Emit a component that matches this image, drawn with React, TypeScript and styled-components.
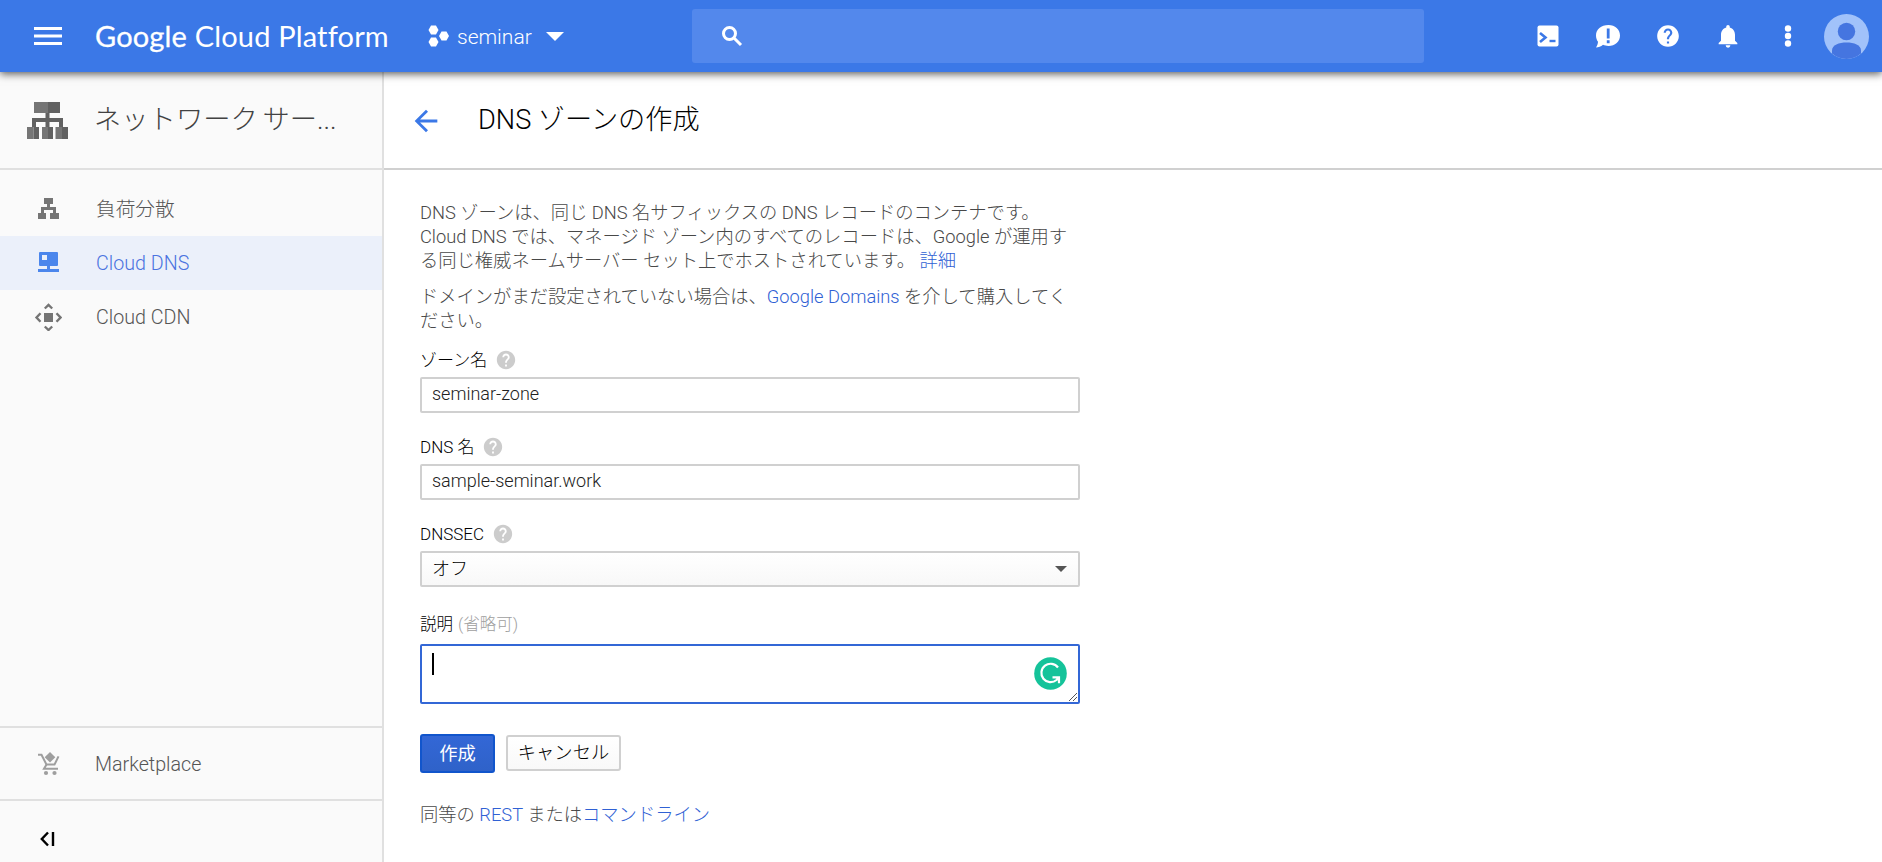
import React from 'react';
import styled, { createGlobalStyle } from 'styled-components';
import { MdArrowBack, MdHelp, MdNotifications } from 'react-icons/md';

const GlobalStyle = createGlobalStyle`
  * { box-sizing: border-box; }
  body {
    margin: 0;
    background: #fff;
    font-family: Roboto, 'Noto Sans CJK JP', sans-serif;
    font-weight: 300;
    color: #000;
    overflow: hidden;
  }
`;

const Page = styled.div`
  display: flex;
  flex-direction: column;
  height: 862px;
`;

/* ---------- top bar ---------- */

const TopBar = styled.header`
  position: relative;
  z-index: 2;
  flex: none;
  display: flex;
  align-items: center;
  height: 72px;
  padding: 0 13px 0 34px;
  background: #3b78e7;
  color: #fff;
  box-shadow: 0 2px 8px rgba(0, 0, 0, 0.65);
`;

const MenuBars = styled.svg`
  flex: none;
  width: 28px;
  height: 18px;
`;

const Brand = styled.div`
  width: 294px;
  margin: 0 39px 0 33px;
  font-family: Lato, sans-serif;
  font-size: 29px;
  font-weight: 400;
  line-height: 40px;
  letter-spacing: 0.17px;
  white-space: nowrap;
`;

const BrandStrong = styled.span`
  -webkit-text-stroke: 0.3px #fff;
`;

const Project = styled.div`
  display: flex;
  align-items: center;
  width: 264px;
`;

const ProjectName = styled.span`
  margin: 0 14px 0 7px;
  padding-top: 2px;
  font-size: 21px;
  line-height: 30px;
`;

const Search = styled.div`
  display: flex;
  align-items: center;
  width: 732px;
  height: 54px;
  padding-left: 30px;
  border-radius: 3px;
  background: #5388ec;
`;

const Actions = styled.div`
  display: flex;
  align-items: center;
  margin-left: auto;
`;

const Action = styled.span`
  display: flex;
  align-items: center;
  justify-content: center;
  width: 60px;
  height: 36px;
`;

const Avatar = styled.svg`
  width: 45px;
  height: 45px;
  margin-left: 6px;
`;

/* ---------- sidebar ---------- */

const Body = styled.div`
  flex: 1;
  display: flex;
  min-height: 0;
`;

const Sidebar = styled.nav`
  flex: none;
  display: flex;
  flex-direction: column;
  width: 384px;
  background: #fafafa;
  border-right: 2px solid #e0e0e0;
`;

const SideHeader = styled.div`
  display: flex;
  align-items: center;
  height: 98px;
  padding: 0 0 0 27px;
  border-bottom: 2px solid #e0e0e0;
  color: #424242;
  font-size: 27.3px;
`;

const SideTitle = styled.span`
  margin-left: 26px;
  line-height: 40px;
  word-spacing: -2px;
  white-space: nowrap;
`;

const SideList = styled.div`
  flex: 1;
  padding-top: 12px;
`;

const SideItem = styled.div<{ $active?: boolean; $height?: number; $lift?: number }>`
  display: flex;
  align-items: center;
  height: ${(p) => p.$height ?? 54}px;
  padding: 0 0 ${(p) => p.$lift ?? 0}px 34px;
  background: ${(p) => (p.$active ? '#ebf0fa' : 'transparent')};
  color: ${(p) => (p.$active ? '#4a73e0' : '#555')};
  font-size: 19.7px;
`;

const SideIcon = styled.svg`
  flex: none;
  width: 28px;
  height: 28px;
  margin-right: 34px;
`;

const SideLabel = styled.span`
  padding-top: 2px;
  margin-left: -1px;
`;

const SideFooter = styled.div`
  border-top: 2px solid #e0e0e0;
`;

const Collapse = styled.div`
  display: flex;
  height: 63px;
  padding: 30px 0 0 40px;
  border-top: 2px solid #e0e0e0;
`;

/* ---------- content ---------- */

const Main = styled.main`
  flex: 1;
  background: #fff;
`;

const TitleBar = styled.div`
  display: flex;
  align-items: center;
  height: 98px;
  padding: 2px 0 0 25px;
  border-bottom: 2px solid #d0d0d0;
`;

const Title = styled.h1`
  margin: 0 0 0 35px;
  padding-bottom: 3px;
  font-size: 27.2px;
  font-weight: 300;
  line-height: 40px;
`;

const Form = styled.div`
  width: 696px;
  padding: 31px 0 0 36px;
`;

const Paragraph = styled.p<{ $gap?: number }>`
  margin: 0 0 ${(p) => p.$gap ?? 12}px;
  color: #484848;
  font-size: 18.3px;
  line-height: 24px;
  white-space: nowrap;
`;

const Line = styled.span`
  display: block;
  height: 24px;
`;

const Link = styled.a`
  color: #3061d4;
`;

const Field = styled.div<{ $gap?: number }>`
  margin-bottom: ${(p) => p.$gap ?? 21}px;
`;

const Label = styled.div<{ $gap?: number; $size?: number }>`
  display: flex;
  align-items: center;
  height: 24px;
  margin-bottom: ${(p) => p.$gap ?? 6}px;
  padding-top: 2px;
  font-size: ${(p) => p.$size ?? 17}px;
  line-height: 24px;
`;

const Optional = styled.span`
  margin-left: 5px;
  color: #9e9e9e;
`;

const Hint = styled(MdHelp)`
  width: 22px;
  height: 22px;
  margin-left: 8px;
  color: #ccc;
`;

const TextBox = styled.div`
  display: flex;
  align-items: center;
  height: 36px;
  padding: 0 10px 3px;
  border: 2px solid #d0d0d0;
  border-radius: 2px;
  font-size: 18px;
  color: #212121;
`;

const SelectBox = styled(TextBox)`
  justify-content: space-between;
  padding-right: 11px;
  padding-bottom: 0;
  background: linear-gradient(#fff, #f8f8f8);
  color: #000;
`;

const SelectValue = styled.span`
  padding-bottom: 5px;
`;

const TextArea = styled.div`
  position: relative;
  height: 60px;
  padding: 7px 10px;
  border: 2px solid #3367d6;
  border-radius: 2px;
`;

const Caret = styled.span`
  display: block;
  width: 2px;
  height: 22px;
  background: #000;
`;

const Assistant = styled.svg`
  position: absolute;
  right: 11px;
  top: 11px;
`;

const Grip = styled.svg`
  position: absolute;
  right: 0;
  bottom: 0;
`;

const Buttons = styled.div`
  display: flex;
  align-items: center;
  height: 39px;
  margin-bottom: 30px;
`;

const Button = styled.button<{ $primary?: boolean }>`
  display: flex;
  align-items: center;
  justify-content: center;
  width: ${(p) => (p.$primary ? 75 : 115)}px;
  height: ${(p) => (p.$primary ? 39 : 36)}px;
  margin: ${(p) => (p.$primary ? '0 11px 0 0' : '0 0 1px')};
  padding: 0 0 4px;
  border: 2px solid ${(p) => (p.$primary ? '#1155cc' : '#d0d0d0')};
  border-radius: 3px;
  background: ${(p) => (p.$primary ? 'linear-gradient(#3367d6, #2f62c9)' : 'linear-gradient(#fff, #f9f9f9)')};
  color: ${(p) => (p.$primary ? '#fff' : '#000')};
  font: ${(p) => (p.$primary ? 400 : 300)} 18.3px Roboto, 'Noto Sans CJK JP', sans-serif;
  white-space: nowrap;
`;

export default function App() {
  return (
    <Page>
      <GlobalStyle />
      <TopBar>
        <MenuBars viewBox="0 0 28 18">
          <path d="M0 0h28v3H0zM0 7.5h28v3H0zM0 15h28v3H0z" fill="#fff" />
        </MenuBars>
        <Brand>
          <BrandStrong>Google</BrandStrong> Cloud Platform
        </Brand>
        <Project>
          <svg width="22" height="22" viewBox="0 0 22 22" fill="#fff">
            <path d="M3 0.5h5l2.5 4.5L8 9.5H3L0.5 5z" />
            <path d="M3 12.5h5l2.5 4.5L8 21.5H3L0.5 17z" />
            <path d="M13.5 6.5h5L21 11l-2.5 4.5h-5L11 11z" />
          </svg>
          <ProjectName>seminar</ProjectName>
          <svg width="18" height="9" viewBox="0 0 18 9">
            <path d="M0 0h18L9 9z" fill="#fff" />
          </svg>
        </Project>
        <Search>
          <svg width="21" height="21" viewBox="0 0 21 21" fill="none" stroke="#fff" strokeWidth="3">
            <circle cx="7.500" cy="7.500" r="6" />
            <path d="M12 12l7 7" />
          </svg>
        </Search>
        <Actions>
          <Action>
            <svg width="22" height="22" viewBox="0 0 22 22">
              <rect x="0.5" y="0.5" width="21" height="21" rx="2" fill="#fff" />
              <path d="M3 8l5.5 4.5L3 17" fill="none" stroke="#3b78e7" strokeWidth="2.6" />
              <path d="M12.5 14.8h6v2.4h-6z" fill="#3b78e7" />
            </svg>
          </Action>
          <Action>
            <svg width="26" height="24" viewBox="0 0 26 24">
              <path d="M13.5 1C20 1 25 5.500 25 11.500S20 22 13.500 22C11.500 22 9.500 21.500 8 20.800C6 22.500 3.500 23.500 1 23.500C2.300 21.500 3 19.500 3 17.800C1.700 16 1 13.800 1 11.500C1 5.500 6 1 13.500 1z" fill="#fff" />
              <path d="M11.800 4.500h2.800v10h-2.800zM11.800 16.300h2.800v3h-2.800z" fill="#3b78e7" />
            </svg>
          </Action>
          <Action>
            <MdHelp size={26} />
          </Action>
          <Action>
            <MdNotifications size={28} />
          </Action>
          <Action>
            <svg width="8" height="22" viewBox="0 0 8 22" fill="#fff">
              <circle cx="4" cy="3.500" r="3.200" />
              <circle cx="4" cy="11" r="3.200" />
              <circle cx="4" cy="18.500" r="3.200" />
            </svg>
          </Action>
          <Avatar viewBox="0 0 45 45">
            <circle cx="22.5" cy="22.5" r="22.500" fill="#a1c2fa" />
            <circle cx="22.5" cy="17.500" r="8.700" fill="#4575e0" />
            <path d="M8 39.600V36.500C8 31 15 28.500 22.500 28.500S37 31 37 36.500V39.600A22.500 22.500 0 0 1 8 39.600z" fill="#4575e0" />
          </Avatar>
        </Actions>
      </TopBar>
      <Body>
        <Sidebar>
          <SideHeader>
            <svg width="41" height="37" viewBox="0 0 41 37">
              <path d="M18.500 11h4v5H36v9h-4v-5h-9.500v5h-4v-5H9v5H5v-9h13.500z" fill="#616161" />
              <path d="M7 0h14v11H7zM0 25h6.500v12H0zM15 25h6v12h-6zM28.500 25H35v12h-6.500z" fill="#757575" />
              <path d="M21 0h12v11H21zM6.500 25H12v12H6.500zM21 25h5v12h-5zM35 25h6v12h-6z" fill="#616161" />
            </svg>
            <SideTitle>ネットワーク サー...</SideTitle>
          </SideHeader>
          <SideList>
            <SideItem $lift={3}>
              <SideIcon viewBox="0 0 28 28" fill="#757575">
                <path d="M10 4h9v6h-3v3h6v6h3v6h-9v-6h3v-3H10v3h2v6H4v-6h3v-6h6v-3h-3z" />
              </SideIcon>
              負荷分散
            </SideItem>
            <SideItem $active>
              <SideIcon viewBox="0 0 28 28" fill="#4b86ec">
                <path fillRule="evenodd" d="M6 3h17a1 1 0 0 1 1 1v12a1 1 0 0 1-1 1h-7v3h9v3H4v-3h9v-3H6a1 1 0 0 1-1-1V4a1 1 0 0 1 1-1zM8 6v5h5V6z" />
              </SideIcon>
              Cloud DNS
            </SideItem>
            <SideItem>
              <SideIcon viewBox="0 0 28 28">
                <path d="M10 10h9v9h-9z" fill="#757575" />
                <path d="M10.800 5.500l3.700-3.500l3.700 3.500M10.800 23.500l3.700 3.500l3.700-3.500M6.500 10.200L2.500 14.500l4 4.300M22.500 10.200l4 4.300l-4 4.300" fill="none" stroke="#757575" strokeWidth="2.400" />
              </SideIcon>
              Cloud CDN
            </SideItem>
          </SideList>
          <SideFooter>
            <SideItem $height={71}>
              <SideIcon viewBox="0 0 28 28" fill="#9e9e9e">
                <path d="M16 2l5.300 5.300L16 12.600L10.700 7.300z" />
                <path d="M4 4.800h3.500l5 9.800h8l4-8.200" fill="none" stroke="#9e9e9e" strokeWidth="2" />
                <path d="M12.500 14.600L10 18.700h14" fill="none" stroke="#9e9e9e" strokeWidth="2" />
                <circle cx="12" cy="23" r="2.100" />
                <circle cx="20.500" cy="23" r="2.100" />
              </SideIcon>
              <SideLabel>Marketplace</SideLabel>
            </SideItem>
            <Collapse>
              <svg width="15" height="16" viewBox="0 0 15 16">
                <path d="M8 1.500L1.800 8L8 14.500M13 1v14" fill="none" stroke="#000" strokeWidth="2.400" />
              </svg>
            </Collapse>
          </SideFooter>
        </Sidebar>
        <Main>
          <TitleBar>
            <MdArrowBack size={34} color="#3b78e7" />
            <Title>DNS ゾーンの作成</Title>
          </TitleBar>
          <Form>
            <Paragraph>
              <Line>DNS ゾーンは、同じ DNS 名サフィックスの DNS レコードのコンテナです。</Line>
              <Line>Cloud DNS では、マネージド ゾーン内のすべてのレコードは、Google が運用す</Line>
              <Line>
                る同じ権威ネームサーバー セット上でホストされています。 <Link>詳細</Link>
              </Line>
            </Paragraph>
            <Paragraph $gap={14}>
              <Line>
                ドメインがまだ設定されていない場合は、<Link>Google Domains</Link> を介して購入してく
              </Line>
              <Line>ださい。</Line>
            </Paragraph>
            <Field>
              <Label>
                ゾーン名
                <Hint />
              </Label>
              <TextBox>seminar-zone</TextBox>
            </Field>
            <Field>
              <Label>
                DNS 名
                <Hint />
              </Label>
              <TextBox>sample-seminar.work</TextBox>
            </Field>
            <Field $gap={25}>
              <Label>
                DNSSEC
                <Hint />
              </Label>
              <SelectBox>
                <SelectValue>オフ</SelectValue>
                <svg width="12" height="6" viewBox="0 0 12 6">
                  <path d="M0 0h12L6 6z" fill="#555" />
                </svg>
              </SelectBox>
            </Field>
            <Field $gap={30}>
              <Label $gap={8} $size={16.5}>
                説明<Optional>(省略可)</Optional>
              </Label>
              <TextArea>
                <Caret />
                <Assistant width="33" height="33" viewBox="0 0 33 33">
                  <circle cx="16.5" cy="16.500" r="16.300" fill="#15c39a" />
                  <path d="M24 10.500A9.200 9.200 0 1 0 22.500 23L25 20.500M18.500 20.300h6.500v6" fill="none" stroke="#fff" strokeWidth="2.200" />
                </Assistant>
                <Grip width="10" height="10" viewBox="0 0 10 10">
                  <path d="M1 9L9 1M5 9L9 5" stroke="#555" strokeWidth="1" />
                </Grip>
              </TextArea>
            </Field>
            <Buttons>
              <Button $primary>作成</Button>
              <Button>キャンセル</Button>
            </Buttons>
            <Paragraph>
              <Line>
                同等の <Link>REST</Link> または<Link>コマンドライン</Link>
              </Line>
            </Paragraph>
          </Form>
        </Main>
      </Body>
    </Page>
  );
}
